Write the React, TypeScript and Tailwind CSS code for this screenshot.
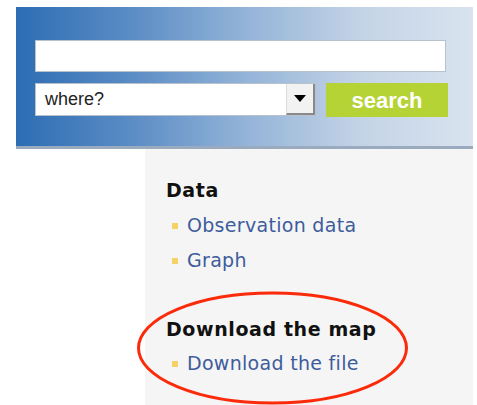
const links = {
  data: ['Observation data', 'Graph'],
  map: ['Download the file'],
};

function LinkItem({ label }: { label: string }) {
  return (
    <li className="flex items-center gap-[9px] h-[35px]">
      <span className="w-[6px] h-[6px] bg-[#f4d266] shrink-0" />
      <a href="#" className="text-[#3d5c9c] text-[19px] tracking-[0.3px] leading-none">
        {label}
      </a>
    </li>
  );
}

export default function App() {
  return (
    <div className="relative w-[477px] h-[405px] bg-white overflow-hidden font-['DejaVu_Sans',sans-serif]">
      {/* search header */}
      <div className="ml-[16px] mt-[7px] w-[457px] h-[142px] border-b-[3px] border-[#9aabbf] bg-[linear-gradient(90deg,#2d6db3_0%,#5a8cc5_25%,#93b3d8_50%,#c3d3e6_75%,#d9e3ef_100%)] pl-[19px] pt-[33px]">
        <input
          type="text"
          className="block w-[411px] h-[32px] bg-white border border-[#b9c2cc] outline-none"
        />
        <div className="flex gap-[10px] mt-[11px]">
          <div className="flex w-[281px] h-[33px] bg-white border border-[#b9c2cc]">
            <span className="flex-1 pl-[9px] flex items-center text-[18px] text-[#222] font-['Liberation_Sans',sans-serif]">
              where?
            </span>
            <span className="w-[29px] h-full flex items-center justify-center bg-[#f2f2f2] border-l border-[#dcdcdc] border-r-2 border-b-2 border-r-[#8a8a8a] border-b-[#8a8a8a]">
              <svg width="12" height="7" viewBox="0 0 12 7">
                <path d="M0 0h12L6 7z" fill="#000" />
              </svg>
            </span>
          </div>
          <button className="w-[122px] h-[34px] bg-[#b5d334] text-white font-bold text-[22px] font-['Liberation_Sans',sans-serif]">
            search
          </button>
        </div>
      </div>

      {/* content */}
      <div className="flex ml-[16px] h-[260px]">
        <div className="w-[129px]" />
        <div className="w-[328px] bg-[#f5f5f5] pl-[21px] pt-[28px]">
          <h3 className="text-[19px] tracking-[0.6px] font-bold text-[#111] leading-[26px]">Data</h3>
          <ul className="mt-[5px] pl-[6px]">
            {links.data.map((l) => (
              <LinkItem key={l} label={l} />
            ))}
          </ul>
          <h3 className="mt-[38px] text-[19px] tracking-[0.6px] font-bold text-[#111] leading-[26px]">
            Download the map
          </h3>
          <ul className="mt-[4px] pl-[6px]">
            {links.map.map((l) => (
              <LinkItem key={l} label={l} />
            ))}
          </ul>
        </div>
      </div>

      {/* red highlight */}
      <svg className="absolute left-0 top-0 pointer-events-none" width="477" height="405">
        <ellipse cx="272.5" cy="348" rx="134" ry="55" fill="none" stroke="#fb2a0a" strokeWidth="3" />
      </svg>
    </div>
  );
}
